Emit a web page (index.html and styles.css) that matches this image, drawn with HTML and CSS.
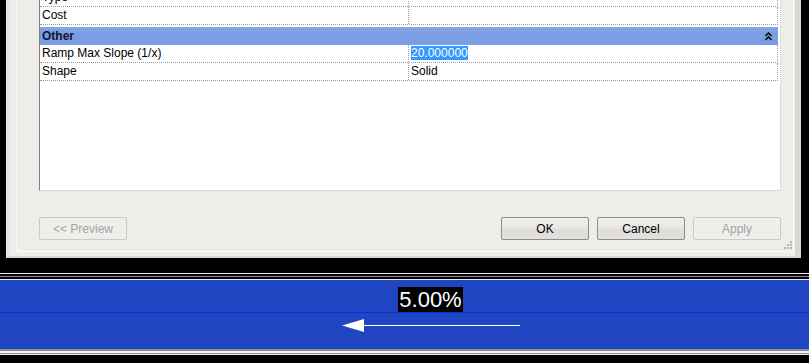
FILE: index.html
```html
<!DOCTYPE html>
<html>
  <head>
    <meta name="viewport" content="width=device-width, initial-scale=1" />
    <link rel="stylesheet" href="styles.css">
  </head>
  <body>
    <!-- Ramp properties dialog (top is scrolled off screen) -->
    <div class="dialog">
      <div class="frame">
        <div class="grid">
          <div class="row">
            <div class="name">Type</div>
            <div class="value"></div>
          </div>
          <div class="row">
            <div class="name">Cost</div>
            <div class="value"></div>
          </div>

          <div class="category">
            <span>Other</span>
            <svg class="collapse" width="7" height="9" viewBox="0 0 7 9">
              <path d="M0.5 4 L3.5 1 L6.5 4 M0.5 8 L3.5 5 L6.5 8" fill="none" stroke="#111" stroke-width="1.6" />
            </svg>
          </div>

          <div class="row">
            <div class="name">Ramp Max Slope (1/x)</div>
            <div class="value"><span class="selected">20.000000</span></div>
          </div>
          <div class="row">
            <div class="name">Shape</div>
            <div class="value">Solid</div>
          </div>
        </div>

        <div class="buttons">
          <button type="button" class="btn" disabled>&lt;&lt; Preview</button>
          <div class="actions">
            <button type="button" class="btn">OK</button>
            <button type="button" class="btn">Cancel</button>
            <button type="button" class="btn" disabled>Apply</button>
          </div>
        </div>
      </div>

      <!-- resize grip -->
      <svg class="grip" width="8" height="8" viewBox="0 0 8 8">
        <rect x="6" y="0" width="2" height="2" fill="#b4b4b4" />
        <rect x="3" y="3" width="2" height="2" fill="#b4b4b4" />
        <rect x="6" y="3" width="2" height="2" fill="#b4b4b4" />
        <rect x="0" y="6" width="2" height="2" fill="#b4b4b4" />
        <rect x="3" y="6" width="2" height="2" fill="#b4b4b4" />
        <rect x="6" y="6" width="2" height="2" fill="#b4b4b4" />
      </svg>
    </div>

    <!-- Slope annotation strip -->
    <div class="strip">
      <div class="line white"></div>
      <div class="line dark"></div>
      <div class="line grey"></div>
      <div class="line dark"></div>
      <div class="line white"></div>
      <div class="band">
        <div class="upper">
          <span class="label">5.00%</span>
        </div>
        <div class="lower">
          <svg class="arrow" width="180" height="14" viewBox="0 0 180 14">
            <polygon points="0,6.5 22,0 22,13" fill="#fff" />
            <line x1="20" y1="6.5" x2="178" y2="6.5" stroke="#fff" stroke-width="1" />
          </svg>
        </div>
      </div>
      <div class="line grey2"></div>
      <div class="line white2"></div>
      <div class="line grey"></div>
      <div class="line white"></div>
    </div>
  </body>
</html>
```

FILE: styles.css
```css
body {
  margin: 0;
  background: #000;
  font-family: "Liberation Sans", Arial, sans-serif;
  font-size: 12px;
  color: #000;
  width: 809px;
  height: 363px;
  overflow: hidden;
}

/* Dialog */
.dialog {
  position: relative;
  margin: -11px 0 0 9px;
  width: 786px;
  background: #eeedea;
  border-left: 3px solid #e6e5e3;
  border-right: 6px solid #d9d7d4;
  border-bottom: 2px solid #d9d7d4;
  box-sizing: content-box;
  padding-bottom: 4px;
  margin-left: 6px;
}

.frame {
  margin-left: 7px;
  margin-right: 1px;
  padding: 0 12px 11px 22px;
  border-left: 1px solid #fafafa;
  border-right: 1px solid #fafafa;
  border-bottom: 1px solid #fafafa;
}

.grid {
  height: 201px;
  background: #fff;
  border-left: 1px solid #7f7f7f;
  border-right: 1px solid #dedede;
  border-bottom: 1px solid #d6d6d6;
}

.row {
  display: flex;
  height: 17px;
  line-height: 16px;
  margin-right: 2px;
  border-bottom: 1px dotted #9a9a9a;
  border-right: 1px dotted #9a9a9a;
}

.name {
  width: 369px;
  padding-left: 2px;
  box-sizing: border-box;
  border-right: 1px dotted #9a9a9a;
  white-space: nowrap;
}

.value {
  flex: 1;
  padding-left: 2px;
}

.selected {
  background: #3399ff;
  color: #fff;
  display: inline-block;
  line-height: 14px;
  margin-top: 1px;
}

.category {
  display: flex;
  justify-content: space-between;
  align-items: center;
  height: 18px;
  margin: 2px 2px 0 0;
  padding: 0 6px 0 2px;
  background: linear-gradient(#8aa7e0, #7b9de4 30%, #7a9ce3);
  font-weight: bold;
  color: #0d1530;
}

.collapse {
  margin-top: 1px;
}

/* Buttons */
.buttons {
  display: flex;
  justify-content: space-between;
  margin-top: 26px;
}

.actions {
  display: flex;
  gap: 8px;
}

.btn {
  width: 88px;
  height: 23px;
  padding: 0;
  font-family: "Liberation Sans", Arial, sans-serif;
  font-size: 12px;
  color: #000;
  border: 1px solid #8c8c8c;
  border-radius: 2px;
  background: linear-gradient(#f0efed, #e8e6e3 50%, #dfddda 50%, #e2e0dd);
}

.btn:disabled {
  color: #a3a3a3;
  border-color: #cbcac8;
  background: #efeeeb;
}

.grip {
  position: absolute;
  right: 3px;
  bottom: 7px;
}

/* Annotation strip */
.strip {
  margin-top: 15px;
}

.line {
  height: 1px;
}

.white {
  background: #e8e8ee;
}

.white2 {
  height: 2px;
  background: #f2f2f2;
}

.dark {
  height: 2px;
  background: #05050a;
}

.grey {
  background: #8c8c96;
}

.grey2 {
  height: 2px;
  background: #8e8e8e;
}

.band {
  background: #2045c2;
}

.upper {
  height: 25px;
  padding: 7px 0 0 398px;
  border-bottom: 1px solid #0b2cd6;
}

.label {
  display: inline-block;
  height: 25px;
  width: 65px;
  background: #000;
  color: #fff;
  font-size: 22px;
  line-height: 26px;
  text-align: center;
}

.lower {
  height: 30px;
  padding-left: 342px;
}

.arrow {
  display: block;
  margin-top: 6px;
}
```
